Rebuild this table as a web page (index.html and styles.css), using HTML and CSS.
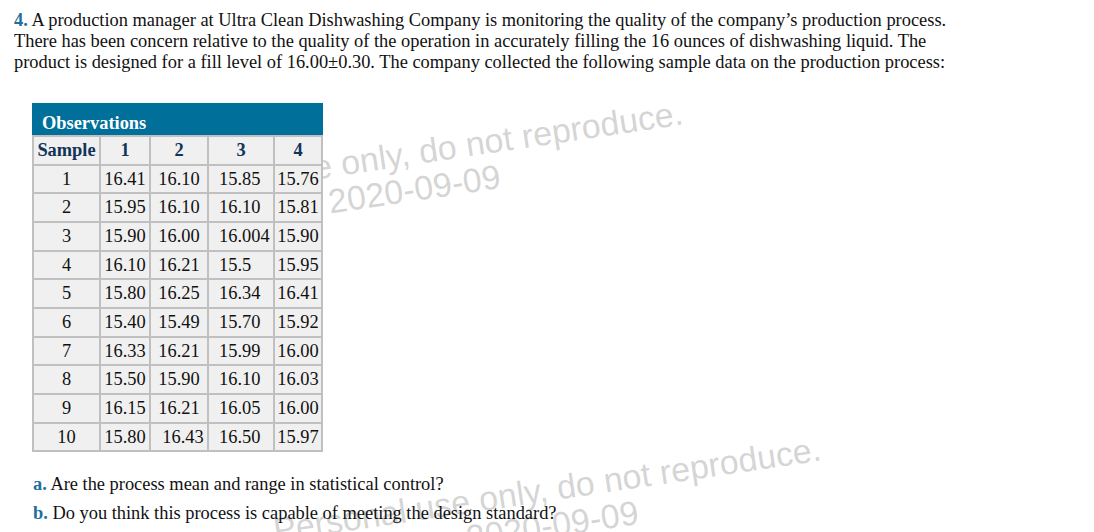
FILE: index.html
```html
<!DOCTYPE html>
<html>
<head>
<meta charset="utf-8">
<link rel="stylesheet" href="styles.css">
</head>
<body>
<div class="page">
  <div class="wm wm-top">Personal use only, do not reproduce.<br>2020-09-09</div>
  <div class="wm wm-bottom">Personal use only, do not reproduce.<br>2020-09-09</div>
  <p class="intro"><span class="num">4.</span> A production manager at Ultra Clean Dishwashing Company is monitoring the quality of the company’s production process. There has been concern relative to the quality of the operation in accurately filling the 16 ounces of dishwashing liquid. The product is designed for a fill level of 16.00±0.30. The company collected the following sample data on the production process:</p>
  <table class="data">
    <colgroup>
      <col class="c0"><col class="c1"><col class="c2"><col class="c3"><col class="c4">
    </colgroup>
    <thead>
      <tr class="title"><th colspan="5">Observations</th></tr>
      <tr class="heads"><th>Sample</th><th>1</th><th>2</th><th>3</th><th>4</th></tr>
    </thead>
    <tbody>
      <tr><td>1</td><td>16.41</td><td>16.10</td><td class="l">15.85</td><td>15.76</td></tr>
      <tr><td>2</td><td>15.95</td><td>16.10</td><td class="l">16.10</td><td>15.81</td></tr>
      <tr><td>3</td><td>15.90</td><td>16.00</td><td class="l">16.004</td><td>15.90</td></tr>
      <tr><td>4</td><td>16.10</td><td>16.21</td><td class="l">15.5</td><td>15.95</td></tr>
      <tr><td>5</td><td>15.80</td><td>16.25</td><td class="l">16.34</td><td>16.41</td></tr>
      <tr><td>6</td><td>15.40</td><td>15.49</td><td class="l">15.70</td><td>15.92</td></tr>
      <tr><td>7</td><td>16.33</td><td>16.21</td><td class="l">15.99</td><td>16.00</td></tr>
      <tr><td>8</td><td>15.50</td><td>15.90</td><td class="l">16.10</td><td>16.03</td></tr>
      <tr><td>9</td><td>16.15</td><td>16.21</td><td class="l">16.05</td><td>16.00</td></tr>
      <tr><td>10</td><td>15.80</td><td class="shift">16.43</td><td class="l">16.50</td><td>15.97</td></tr>
    </tbody>
  </table>
  <div class="questions">
    <p class="q"><span class="num">a.</span> Are the process mean and range in statistical control?</p>
    <p class="q"><span class="num">b.</span> Do you think this process is capable of meeting the design standard?</p>
  </div>
</div>
</body>
</html>
```

FILE: styles.css
```css
html, body {
  margin: 0;
  padding: 0;
  background: #fff;
}
body {
  font-family: "Liberation Serif", "Times New Roman", serif;
  color: #111;
}
.page {
  position: relative;
  width: 1094px;
  height: 532px;
  overflow: hidden;
  padding: 10px 0 0 14px;
  box-sizing: border-box;
}
.intro {
  position: relative;
  margin: 0;
  font-size: 18.4px;
  line-height: 21px;
  width: 955px;
}
.num {
  color: #1f6f9e;
  font-weight: bold;
}
.data {
  position: relative;
  margin: 30px 0 0 18px;
  border-collapse: collapse;
  table-layout: fixed;
  width: 289px;
  font-size: 18.4px;
  background: #f0f0f0;
}
.c0 { width: 67px; }
.c1 { width: 50px; }
.c2 { width: 58px; }
.c3 { width: 66px; }
.c4 { width: 48px; }
.data .title th {
  background: #006f99;
  color: #fff;
  text-align: left;
  padding: 7px 8px 1px;
  height: 22px;
  line-height: 22px;
  border: 2px solid #006f99;
  border-bottom: 2px solid #c0c0c0;
}
.data .heads th {
  color: #13345a;
  font-weight: bold;
  text-align: center;
  padding: 3px 0;
  line-height: 20.67px;
  border: 2px solid #c0c0c0;
}
.data td {
  text-align: center;
  padding: 3px 0;
  line-height: 20.67px;
  border: 2px solid #c0c0c0;
  white-space: nowrap;
}
.data td.l {
  text-align: left;
  padding-left: 10px;
}
.data td.shift {
  padding-left: 8px;
}
.questions {
  position: relative;
  margin: 18px 0 0 19px;
}
.q {
  margin: 0;
  font-size: 18.4px;
  line-height: 29px;
}
.wm {
  position: absolute;
  font-family: "Liberation Sans", Arial, sans-serif;
  font-size: 34px;
  line-height: 36px;
  color: rgba(160, 160, 160, 0.45);
  text-align: center;
  white-space: nowrap;
  transform: rotate(-8.5deg);
  transform-origin: center center;
}
.wm-top {
  left: 135px;
  top: 135px;
}
.wm-bottom {
  left: 273px;
  top: 471px;
}
```
